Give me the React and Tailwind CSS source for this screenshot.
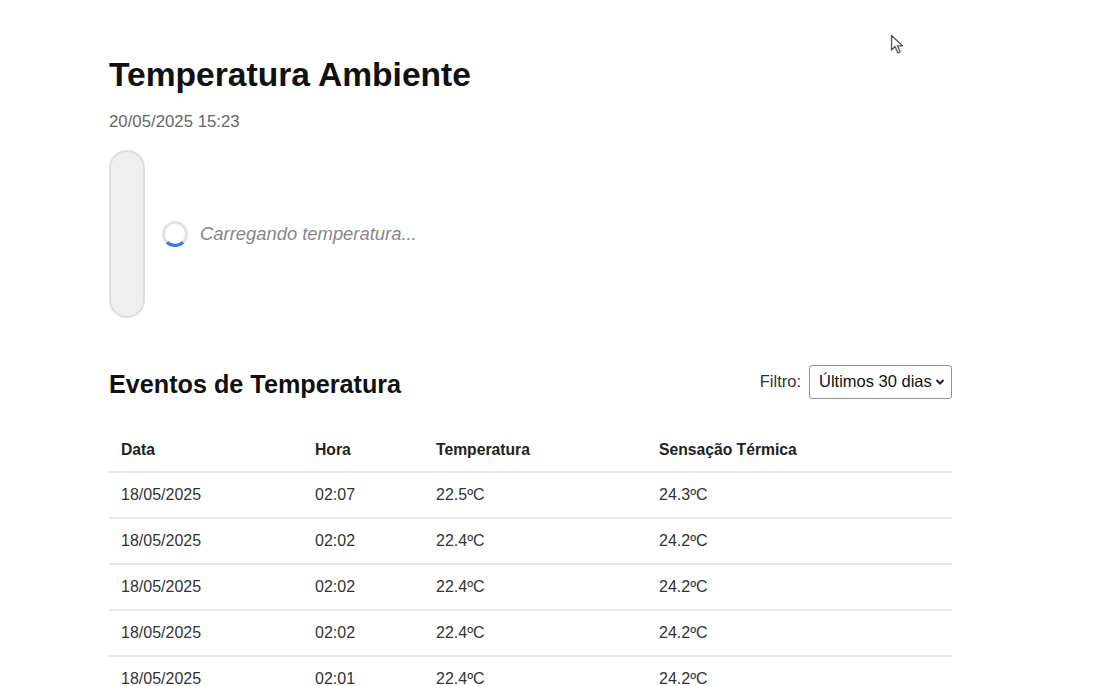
import React from 'react';

const events = [
  { data: '18/05/2025', hora: '02:07', temp: '22.5ºC', sensacao: '24.3ºC' },
  { data: '18/05/2025', hora: '02:02', temp: '22.4ºC', sensacao: '24.2ºC' },
  { data: '18/05/2025', hora: '02:02', temp: '22.4ºC', sensacao: '24.2ºC' },
  { data: '18/05/2025', hora: '02:02', temp: '22.4ºC', sensacao: '24.2ºC' },
  { data: '18/05/2025', hora: '02:01', temp: '22.4ºC', sensacao: '24.2ºC' },
  { data: '18/05/2025', hora: '02:01', temp: '22.4ºC', sensacao: '24.2ºC' }
];

export default function App() {
  return (
    <div className="relative h-[686px] overflow-hidden bg-white font-['Liberation_Sans',Arial,sans-serif] text-[#222]">
      {/* ponteiro do mouse */}
      <svg
        className="absolute left-[890px] top-[34px]"
        width="16"
        height="22"
        viewBox="0 0 16 22"
      >
        <path
          d="M1.5 1.5 L1.5 16 L5 12.5 L7.8 19 L10.2 18 L7.5 11.8 L12.5 11.8 Z"
          fill="white"
          stroke="#555"
          strokeWidth="1.3"
          strokeLinejoin="round"
        />
      </svg>

      <div className="ml-[109px] flex w-[843px] flex-col">
        <h1 className="mt-[56px] text-[33.6px] font-bold leading-[38px] text-[#111]">
          Temperatura Ambiente
        </h1>
        <p className="mt-[18px] text-[16.8px] leading-[19px] text-[#666]">
          20/05/2025 15:23
        </p>

        {/* termômetro + carregando */}
        <div className="mt-[19px] flex items-center">
          <div className="h-[168px] w-[36px] rounded-full border-2 border-[#dedede] bg-[#efefef]" />
          <div className="ml-[17px] h-[26px] w-[26px] rounded-full border-[3px] border-[#e2e2e2] border-b-[#2f7de1]" />
          <span className="ml-[12px] text-[18.4px] italic text-[#888]">
            Carregando temperatura...
          </span>
        </div>

        {/* eventos */}
        <div className="mt-[46px] flex items-center justify-between">
          <h2 className="mt-[6px] text-[25.2px] font-bold leading-[29px] text-[#111]">
            Eventos de Temperatura
          </h2>
          <div className="flex items-center gap-[8px] text-[16.5px] text-[#333]">
            <span>Filtro:</span>
            <div className="flex h-[34px] w-[143px] items-center justify-between rounded-[3px] border border-[#8f8f8f] bg-white pl-[9px] pr-[6px] text-[#111]">
              <span>Últimos 30 dias</span>
              <svg width="10" height="8" viewBox="0 0 10 8">
                <path
                  d="M1.5 2 L5 5.5 L8.5 2"
                  fill="none"
                  stroke="#222"
                  strokeWidth="2"
                />
              </svg>
            </div>
          </div>
        </div>

        <table className="mt-[30px] w-full border-collapse text-left">
          <thead>
            <tr className="h-[43px] border-b-2 border-[#e8e8e8]">
              <th className="w-[194px] pl-[12px] text-[15.7px] font-bold text-[#222]">Data</th>
              <th className="w-[121px] pl-[12px] text-[15.7px] font-bold text-[#222]">Hora</th>
              <th className="w-[223px] pl-[12px] text-[15.7px] font-bold text-[#222]">Temperatura</th>
              <th className="pl-[12px] text-[15.7px] font-bold text-[#222]">Sensação Térmica</th>
            </tr>
          </thead>
          <tbody>
            {events.map((ev, i) => (
              <tr key={i} className="h-[46px] border-b-2 border-[#e8e8e8] text-[16px] text-[#333]">
                <td className="pl-[12px]">{ev.data}</td>
                <td className="pl-[12px]">{ev.hora}</td>
                <td className="pl-[12px]">{ev.temp}</td>
                <td className="pl-[12px]">{ev.sensacao}</td>
              </tr>
            ))}
          </tbody>
        </table>
      </div>
    </div>
  );
}
